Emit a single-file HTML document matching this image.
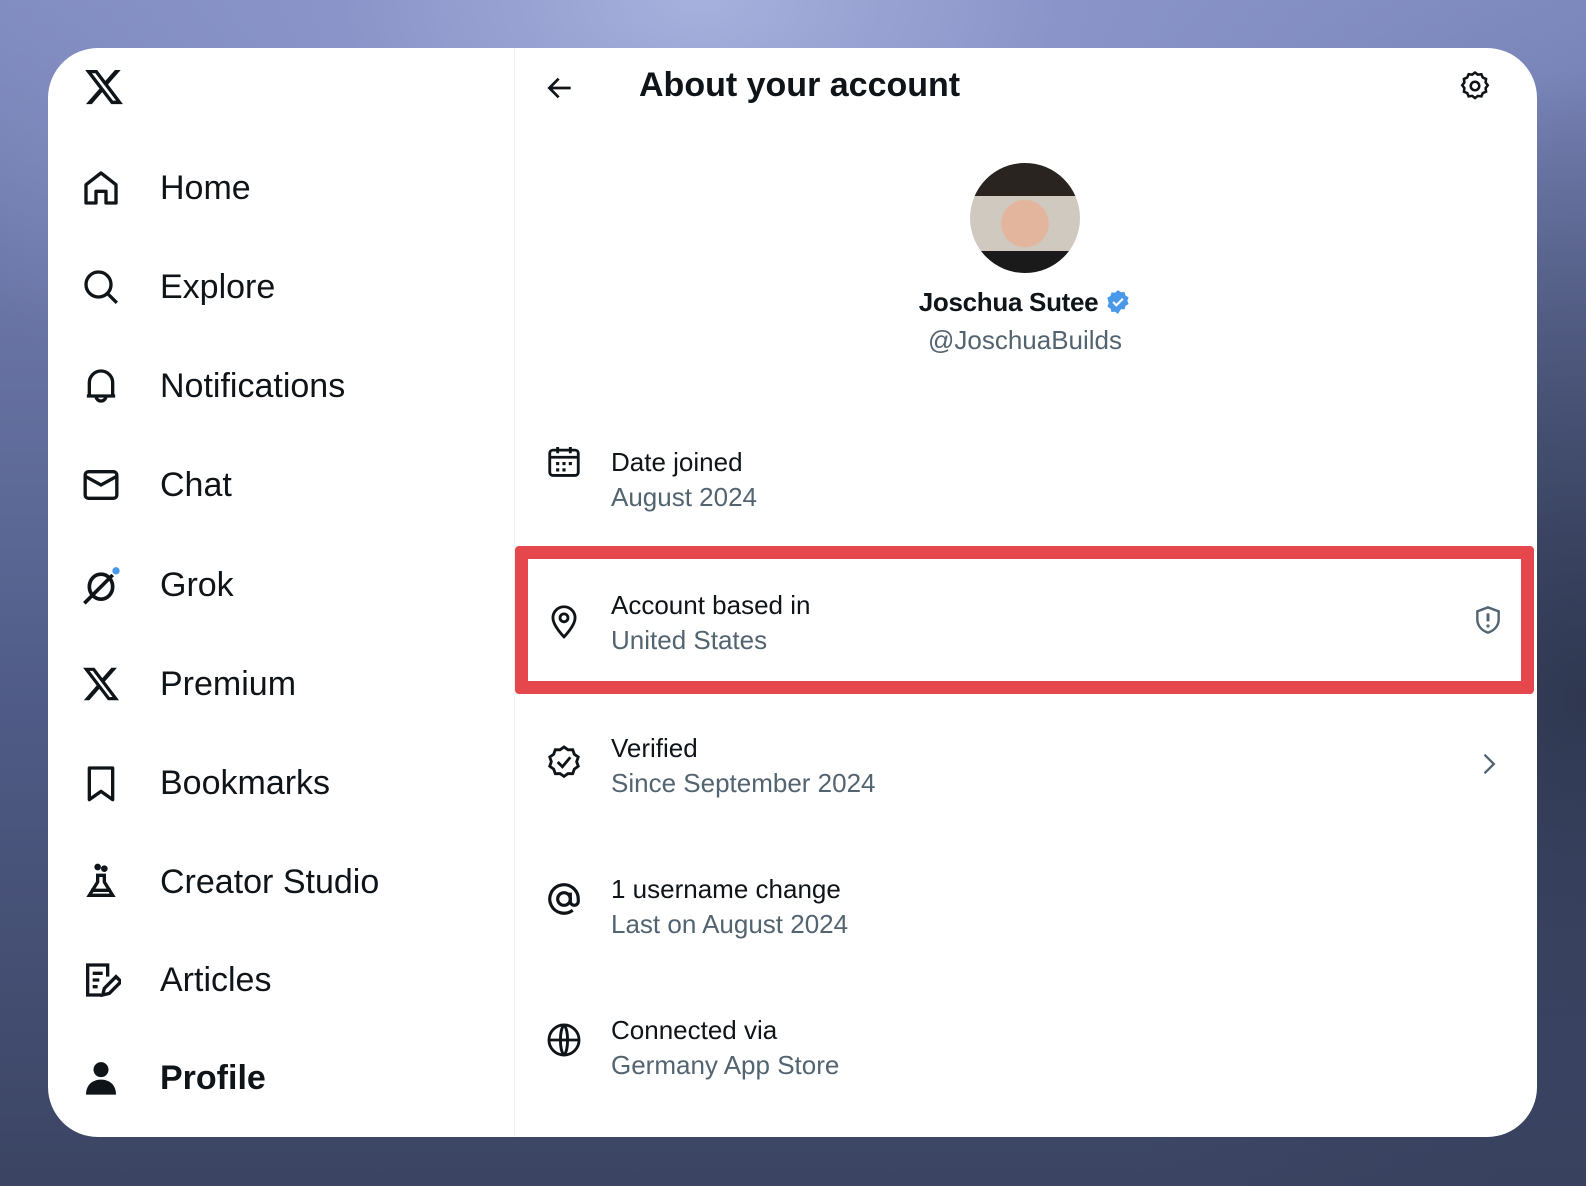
<!DOCTYPE html>
<html><head><meta charset="utf-8"><style>
*{margin:0;padding:0;box-sizing:border-box}
body{width:1586px;height:1186px;overflow:hidden;font-family:"Liberation Sans",Arial,sans-serif;
background:radial-gradient(ellipse 900px 500px at 700px 0px,#a7b1dd 0%,#8a94c8 40%,transparent 100%),radial-gradient(ellipse 700px 700px at 1586px 700px,#2f3850 0%,transparent 90%),linear-gradient(180deg,#7d88bd 0%,#4f5b86 60%,#3b4462 100%);position:relative}
.card{position:absolute;left:48px;top:48px;width:1489px;height:1089px;background:#fff;border-radius:50px;overflow:hidden}
.div{position:absolute;left:466px;top:0;width:1px;height:100%;background:#eff3f4}
.nav{position:absolute;left:0;font-size:34px;color:#0f1419;display:flex;align-items:center;height:50px}
.nav svg{position:absolute;left:33px;width:40px;height:40px}
.nav span{position:absolute;left:112px;white-space:nowrap}
.abs{position:absolute}
.lbl{position:absolute;left:563px;font-size:26px;color:#0f1419;white-space:nowrap}
.sub{color:#536471}
.ic{position:absolute;left:497px;width:38px;height:38px}
</style></head><body>
<div class="card">
<svg class="abs" style="left:35px;top:18px" width="42" height="42" viewBox="0 0 24 24"><path fill="#0f1419" d="M18.244 2.25h3.308l-7.227 8.26 8.502 11.24H16.17l-5.214-6.817L4.99 21.750H1.68l7.73-8.835L1.254 2.25H8.08l4.713 6.231zm-1.161 17.52h1.833L7.084 4.126H5.117z"/></svg>
<div class="nav" style="top:115px"><svg viewBox="0 0 24 24" fill="none" stroke="#0f1419" stroke-width="2"><path d="M3 10l9-7 9 7v11h-6v-7H9v7H3z" stroke-linejoin="round"/></svg><span>Home</span></div>
<div class="nav" style="top:214px"><svg viewBox="0 0 24 24" fill="none" stroke="#0f1419" stroke-width="2"><circle cx="10.5" cy="10.5" r="7.5"/><path d="M16 16l5.5 5.5"/></svg><span>Explore</span></div>
<div class="nav" style="top:313px"><svg viewBox="0 0 24 24" fill="none" stroke="#0f1419" stroke-width="2"><path d="M5 18V10a7 7 0 0114 0v8zM3.5 18h17M9 18a3 3 0 006 0"/></svg><span>Notifications</span></div>
<div class="nav" style="top:412px"><svg viewBox="0 0 24 24" fill="none" stroke="#0f1419" stroke-width="2"><rect x="2.5" y="4" width="19" height="16" rx="2"/><path d="M3 7l9 5 9-5"/></svg><span>Chat</span></div>
<div class="nav" style="top:512px"><svg viewBox="0 0 24 24" fill="none" stroke="#0f1419" stroke-width="2.2"><ellipse cx="12" cy="13" rx="7" ry="7.5"/><path d="M2 23L19 6"/><circle cx="21" cy="3.5" r="2.2" fill="#4a99e9" stroke="none"/></svg><span>Grok</span></div>
<div class="nav" style="top:611px"><svg viewBox="0 0 24 24"><path fill="#0f1419" d="M18.244 2.25h3.308l-7.227 8.26 8.502 11.24H16.17l-5.214-6.817L4.99 21.75H1.68l7.73-8.835L1.254 2.25H8.08l4.713 6.231zm-1.161 17.52h1.833L7.084 4.126H5.117z"/></svg><span>Premium</span></div>
<div class="nav" style="top:710px"><svg viewBox="0 0 24 24" fill="none" stroke="#0f1419" stroke-width="2"><path d="M5 3h14v19l-7-5-7 5z" stroke-linejoin="round"/></svg><span>Bookmarks</span></div>
<div class="nav" style="top:809px"><svg viewBox="0 0 24 24" fill="none" stroke="#0f1419" stroke-width="2"><path d="M9 8h6M10 8v4l-5 8h14l-5-8V8M6 17h12"/><circle cx="10" cy="3" r="1" fill="#0f1419"/><circle cx="14" cy="4" r="1" fill="#0f1419"/></svg><span>Creator Studio</span></div>
<div class="nav" style="top:907px"><svg viewBox="0 0 24 24" fill="none" stroke="#0f1419" stroke-width="2"><path d="M12 21H4V3h12v7M7 8h6M7 12h4M7 16h3M13 21l1-4 7-7 3 3-7 7z"/></svg><span>Articles</span></div>
<div class="nav" style="top:1005px"><svg viewBox="0 0 24 24" fill="#0f1419"><circle cx="12" cy="7" r="4.5"/><path d="M3 22c0-6 4-9 9-9s9 3 9 9z"/></svg><span style="font-weight:bold">Profile</span></div>
<div class="div"></div>
<svg class="abs" style="left:496px;top:24px" width="32" height="32" viewBox="0 0 24 24" fill="none" stroke="#0f1419" stroke-width="2"><path d="M20 12H5M11 5l-7 7 7 7"/></svg>
<div class="abs" style="left:591px;top:18px;font-size:34px;font-weight:bold;color:#0f1419">About your account</div>
<svg class="abs" style="left:1410px;top:21px" width="34" height="34" viewBox="0 0 24 24" fill="none" stroke="#0f1419" stroke-width="1.8"><path d="M12 2.5l2 1.5 2.5-.3 1 2.3 2.3 1-.3 2.5 1.5 2-1.5 2 .3 2.5-2.3 1-1 2.3-2.5-.3-2 1.5-2-1.5-2.5.3-1-2.3-2.3-1 .3-2.5-1.5-2 1.5-2-.3-2.5 2.3-1 1-2.3 2.5.3z"/><circle cx="12" cy="12" r="3"/></svg>
<div class="abs" style="left:922px;top:115px;width:110px;height:110px;border-radius:50%;background:radial-gradient(circle at 50% 55%,#e2b59c 0 28%,transparent 30%),linear-gradient(180deg,#2a2420 0 30%,#cfc9c0 30% 80%,#1a1a1a 80%)"></div>
<div class="abs" style="left:857px;top:239px;width:240px;text-align:center;font-size:26px;font-weight:bold;color:#0f1419;white-space:nowrap;letter-spacing:-0.3px">Joschua Sutee <svg width="26" height="26" viewBox="0 0 24 24" style="vertical-align:-4px"><path fill="#4a99e9" d="M12 1l2.7 2 3.3-.2.9 3.2 2.9 1.7-1.2 3.1 1.2 3.1-2.9 1.7-.9 3.2-3.300-.2L12 23l-2.7-2-3.3.2-.9-3.2-2.9-1.7 1.2-3.1L2.2 8.1 5.1 6.4 6 3.2l3.3.2z"/><path d="M7.5 12l3 3 6-6" stroke="#fff" stroke-width="2" fill="none"/></svg></div>
<div class="abs" style="left:827px;top:277px;width:300px;text-align:center;font-size:26px;color:#536471">@JoschuaBuilds</div>

<svg class="ic" style="top:395px" viewBox="0 0 24 24" fill="none" stroke="#0f1419" stroke-width="1.8"><rect x="3" y="4.5" width="18" height="16" rx="2"/><path d="M3 9h18M8 2.5v4M16 2.5v4"/><g fill="#0f1419" stroke="none"><rect x="7" y="12" width="2" height="2"/><rect x="11" y="12" width="2" height="2"/><rect x="15" y="12" width="2" height="2"/><rect x="7" y="16" width="2" height="2"/><rect x="11" y="16" width="2" height="2"/></g></svg>
<div class="lbl" style="top:399px">Date joined<br><span class="sub" style="line-height:38px">August 2024</span></div>

<div class="abs" style="left:467px;top:498px;width:1019px;height:148px;border:13px solid #e5474c;border-radius:4px"></div>
<svg class="ic" style="top:554px" viewBox="0 0 24 24" fill="none" stroke="#0f1419" stroke-width="1.8"><path d="M12 22s7-7 7-12a7 7 0 00-14 0c0 5 7 12 7 12z"/><circle cx="12" cy="10" r="2.5"/></svg>
<div class="lbl" style="top:542px">Account based in<br><span class="sub" style="line-height:38px">United States</span></div>
<svg class="abs" style="left:1424px;top:556px" width="32" height="32" viewBox="0 0 24 24" fill="none" stroke="#536471" stroke-width="1.8"><path d="M12 2.5l8 3v6c0 5-3.5 8.5-8 10-4.5-1.5-8-5-8-10v-6z"/><path d="M12 7v6" stroke-width="2.2"/><circle cx="12" cy="16.5" r="1.2" fill="#536471" stroke="none"/></svg>

<svg class="ic" style="top:695px" viewBox="0 0 24 24" fill="none" stroke="#0f1419" stroke-width="1.8"><path d="M12 2.5l2.5 1.8 3-.1 1 2.9 2.5 1.8-1 2.9 1 2.9-2.5 1.8-1 2.9-3-.1-2.5 1.8-2.5-1.8-3 .1-1-2.9-2.5-1.8 1-2.9-1-2.9 2.5-1.8 1-2.9 3 .1z"/><path d="M8 12l3 3 5-6"/></svg>
<div class="lbl" style="top:685px">Verified<br><span class="sub" style="line-height:38px">Since September 2024</span></div>
<svg class="abs" style="left:1426px;top:702px" width="28" height="28" viewBox="0 0 24 24" fill="none" stroke="#536471" stroke-width="2"><path d="M9 4l8 8-8 8"/></svg>

<svg class="ic" style="top:832px" viewBox="0 0 24 24" fill="none" stroke="#0f1419" stroke-width="2"><circle cx="12" cy="12" r="4"/><path d="M16 8v5.5a2.5 2.5 0 005 0V12a9 9 0 10-3.5 7.1"/></svg>
<div class="lbl" style="top:826px">1 username change<br><span class="sub" style="line-height:38px">Last on August 2024</span></div>

<svg class="ic" style="top:973px" viewBox="0 0 24 24" fill="none" stroke="#0f1419" stroke-width="1.8"><circle cx="12" cy="12" r="9.5"/><path d="M2.5 12h19M12 2.5c-3 3-3 16 0 19M12 2.5c3 3 3 16 0 19"/></svg>
<div class="lbl" style="top:967px">Connected via<br><span class="sub" style="line-height:38px">Germany App Store</span></div>
</div>
</body></html>
